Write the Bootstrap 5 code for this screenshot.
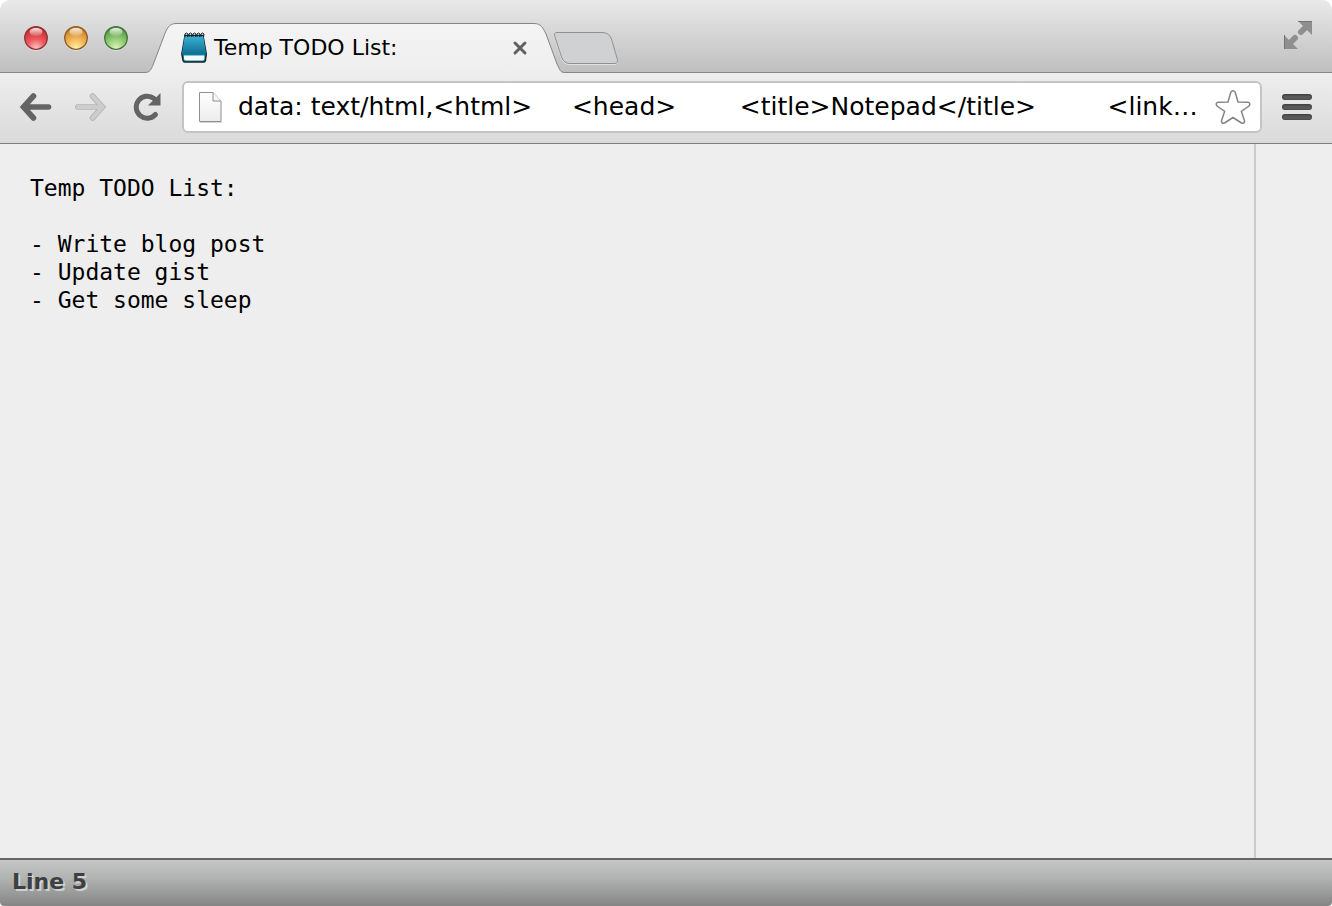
<!DOCTYPE html>
<html lang="en">
<head>
<meta charset="utf-8">
<meta name="viewport" content="width=device-width, initial-scale=1">
<title>Temp TODO List:</title>
<link href="https://cdn.jsdelivr.net/npm/bootstrap@5.3.0/dist/css/bootstrap.min.css" rel="stylesheet">
<style>
  body { background: #fff; font-family: "DejaVu Sans", sans-serif; color: #000; }
  svg { display: block; flex: none; }
  button { background: none; border: 0; padding: 0; color: #5f5f5f; }
  .browser-window { border-radius: 10px 10px 4px 4px; background: #eee; }
  .title-bar { height: 73px; padding-left: 23px; padding-right: 19px; background: linear-gradient(#e9e9e9, #bfbfbf); border-bottom: 1px solid #858585; }
  .lights { gap: 14px; margin-top: 25px; }
  .active-tab { width: 420px; height: 50px; margin: 23px 0 -1px 16px; padding-left: 36px; padding-right: 36px; font-size: 22px; }
  .tab-shape { top: 0; left: 0; }
  .tab-label { line-height: 48px; margin-left: 6px; }
  .new-tab { margin: 31px 0 0 -12px; }
  .tool-bar { height: 71px; padding: 0 19px 2px; background: linear-gradient(#eeeeee, #dadada); border-bottom: 1px solid #7d7d7d; }
  .nav-tools { gap: 23px; margin-right: 20px; }
  .address-bar { height: 52px; margin-right: 19px; padding-left: 15px; padding-right: 9px; background: #fff; border: 2px solid #c4c4c4; border-radius: 6px; }
  .address-bar input { min-width: 0; margin-left: 14px; border: 0; padding: 0; outline: 0; font-size: 25px; line-height: 36px; height: 36px; color: #000; background: none; }
  .notes { padding: 30px; border: 0; border-right: 2px solid #ccc; outline: 0; resize: none; background: #eee; color: #000; font: 23px/28px "DejaVu Sans Mono", monospace; }
  .page-margin { width: 76px; }
  .status-bar { height: 48px; padding-left: 12px; border-top: 2px solid #666; background: linear-gradient(#c6c6c6, #b0b3b1 40%, #858585); border-radius: 0 0 4px 4px; color: #3c4042; font-size: 22px; line-height: 44px; text-shadow: 2px 2px 0 #cfd1d0; }
</style>
</head>
<body>
<div class="browser-window d-flex flex-column vh-100 overflow-hidden">
  <header class="title-bar d-flex align-items-start flex-shrink-0">
    <div class="lights d-flex">
      <button type="button" aria-label="Close window"><svg width="26" height="26" viewBox="0 0 26 26">
        <defs>
          <radialGradient id="red" cx=".5" cy=".95" r=".9"><stop offset="0" stop-color="#ffc4c4"/><stop offset=".45" stop-color="#ee5a5e"/><stop offset="1" stop-color="#c0282d"/></radialGradient>
          <radialGradient id="amber" cx=".5" cy=".95" r=".9"><stop offset="0" stop-color="#fff3a4"/><stop offset=".45" stop-color="#f3b95c"/><stop offset="1" stop-color="#c87a22"/></radialGradient>
          <radialGradient id="green" cx=".5" cy=".95" r=".9"><stop offset="0" stop-color="#dcf7b8"/><stop offset=".45" stop-color="#97cf78"/><stop offset="1" stop-color="#4f943e"/></radialGradient>
          <linearGradient id="gloss" x2="0" y2="1"><stop offset="0" stop-color="#fff" stop-opacity=".9"/><stop offset="1" stop-color="#fff" stop-opacity=".1"/></linearGradient>
        </defs>
        <circle cx="13" cy="14" r="12" fill="#fff" opacity=".4"/><circle cx="13" cy="13" r="11.3" fill="url(#red)" stroke="#8c3436" stroke-width="1.3"/><ellipse cx="13" cy="7" rx="6.5" ry="4" fill="url(#gloss)"/></svg></button>
      <button type="button" aria-label="Minimize window"><svg width="26" height="26" viewBox="0 0 26 26"><circle cx="13" cy="14" r="12" fill="#fff" opacity=".4"/><circle cx="13" cy="13" r="11.3" fill="url(#amber)" stroke="#8c5a26" stroke-width="1.3"/><ellipse cx="13" cy="7" rx="6.5" ry="4" fill="url(#gloss)"/></svg></button>
      <button type="button" aria-label="Zoom window"><svg width="26" height="26" viewBox="0 0 26 26"><circle cx="13" cy="14" r="12" fill="#fff" opacity=".4"/><circle cx="13" cy="13" r="11.3" fill="url(#green)" stroke="#44713a" stroke-width="1.3"/><ellipse cx="13" cy="7" rx="6.5" ry="4" fill="url(#gloss)"/></svg></button>
    </div>
    <div class="active-tab position-relative d-flex align-items-center flex-shrink-0">
      <svg class="tab-shape position-absolute" width="420" height="50" viewBox="0 0 420 50">
        <defs><linearGradient id="tabfill" x2="0" y2="1"><stop offset="0" stop-color="#f4f4f4"/><stop offset="1" stop-color="#eee"/></linearGradient></defs>
        <path d="M0 49.500C5 49.500 6 46.500 8 42L19 13C21.500 6 24 .5 31 .5H389C396 .5 398 5 401 11L412 41C415 47 415 49.500 420 49.500V50H0Z" fill="url(#tabfill)"/>
        <path d="M0 49.500C5 49.500 6 46.500 8 42L19 13C21.500 6 24 .5 31 .5H389C396 .5 398 5 401 11L412 41C415 47 415 49.500 420 49.500" fill="none" stroke="#858585"/>
      </svg>
      <svg class="position-relative" width="27" height="32" viewBox="0 0 27 32">
        <defs><linearGradient id="pad" x2="0" y2="1"><stop offset="0" stop-color="#39b2d4"/><stop offset="1" stop-color="#0d6d90"/></linearGradient></defs>
        <path d="M4 3.500H22L25.300 22L24.500 28.500Q24 30 23 30H3.500Q2.500 30 2 28.500L.8 22Z" fill="#1a87a8" stroke="#12242c" stroke-width="1.400"/>
        <path d="M3.800 4H22.200L25 21Q25 22.500 23.500 22.500H2.500Q1 22.500 1 21Z" fill="url(#pad)"/>
        <path d="M3 23.500H23.300V26.500Q23.300 28.500 21.500 28.500H5Q3 28.500 3 26.500Z" fill="#f3fbfd"/>
        <path d="M4 5q-1-4 1.500-4t1 4M8 5q-1-4 1.500-4t1 4M12 5q-1-4 1.500-4t1 4M16 5q-1-4 1.500-4t1 4M20 5q-1-4 1.500-4t1 4" fill="none" stroke="#182025"/>
      </svg>
      <span class="tab-label position-relative flex-grow-1 text-nowrap">Temp TODO List:</span>
      <button class="position-relative" type="button" aria-label="Close tab"><svg width="18" height="18" viewBox="0 0 18 18"><path d="M4 4L14 14M14 4L4 14" stroke="#606060" stroke-width="3" stroke-linecap="round"/></svg></button>
    </div>
    <button class="new-tab" type="button" aria-label="New tab"><svg width="66" height="36" viewBox="0 0 66 36"><path d="M4 2.500H49Q56 2.500 58.500 9L64 28Q66 33.500 61 33.500H17Q11 33.500 8.500 28L2 7Q.5 2.500 4 2.500Z" fill="none" stroke="#efefef" opacity=".7"/><path d="M4 1.500H49Q56 1.500 58.500 8L64 27Q66 32.500 61 32.500H17Q11 32.500 8.500 26L2 6Q.5 1.500 4 1.500Z" fill="#d0d1d2" stroke="#909090"/></svg></button>
    <button class="ms-auto mt-3" type="button" aria-label="Full screen"><svg width="30" height="36" viewBox="0 0 30 36"><path d="M15 5H29V19ZM1 19V33H15Z" fill="#8f8f8f"/><path d="M24 10L18 16M6 28L12 22" stroke="#8f8f8f" stroke-width="6" stroke-linecap="round"/><path d="M15 5.500H29M1.500 19V33" stroke="#747474"/></svg></button>
  </header>

  <nav class="tool-bar d-flex align-items-center flex-shrink-0" aria-label="Browser">
    <div class="nav-tools d-flex align-items-center">
      <button type="button" aria-label="Back"><svg width="33" height="30" viewBox="0 0 33 30"><path d="M14.500 4L4.500 15L14.500 26M5 15H29.500" fill="none" stroke="#646464" stroke-width="5.600" stroke-linecap="round" stroke-linejoin="miter"/></svg></button>
      <button type="button" aria-label="Forward" disabled><svg width="33" height="30" viewBox="0 0 33 30"><path d="M17.500 4L27.500 15L17.500 26M27 15H2.800" fill="none" stroke="#b4b4b4" stroke-width="5.600" stroke-linecap="round"/><path d="M17.500 4L27.500 15L17.500 26M27 15H2.800" fill="none" stroke="#cdcdcd" stroke-width="4" stroke-linecap="round"/></svg></button>
      <button type="button" aria-label="Reload"><svg width="31" height="30" viewBox="0 0 31 30"><path d="M23 6.500A11 11 0 1 0 24.500 22.500" fill="none" stroke="#646464" stroke-width="5" stroke-linecap="round"/><path d="M29.500 1V13.500H17Z" fill="#646464"/></svg></button>
    </div>
    <div class="address-bar d-flex align-items-center flex-grow-1">
      <svg width="25" height="32" viewBox="0 0 25 32"><defs><linearGradient id="sheet" x2="0" y2="1"><stop offset="0" stop-color="#fff"/><stop offset="1" stop-color="#ececec"/></linearGradient></defs><path d="M1 31.500H23" stroke="#d8d8d8"/><path d="M.5 1.500H14L22 10V30.500H.5Z" fill="url(#sheet)" stroke="#8e8e8e"/><path d="M14 1.500V10H22" fill="#f6f6f6" stroke="#8e8e8e"/></svg>
      <input class="flex-grow-1" type="text" aria-label="Address" spellcheck="false" value="data: text/html,&lt;html&gt;     &lt;head&gt;        &lt;title&gt;Notepad&lt;/title&gt;         &lt;link…">
      <button type="button" aria-label="Bookmark this page"><svg width="36" height="36" viewBox="0 0 36 36"><path d="M15.800 3.200Q18 .2 20.200 3.200L23 13L33 13.300Q36 14 34 17L26.300 22.300L29.600 32Q29.500 35 26.500 34L18 28.500L9.500 34Q6.500 35 6.400 32L9.700 22.300L2 17Q0 14 3 13.300L13 13Z" fill="#fff" stroke="#858585" stroke-width="1.500" stroke-linejoin="round"/></svg></button>
    </div>
    <button type="button" aria-label="Menu"><svg width="32" height="28" viewBox="0 0 32 28"><path d="M4 4H28M4 14H28M4 24H28" stroke="#424242" stroke-width="6" stroke-linecap="round"/><path d="M4 4.500H28M4 14.500H28M4 24.500H28" stroke="#585858" stroke-width="4" stroke-linecap="round"/></svg></button>
  </nav>

  <main class="d-flex flex-grow-1 overflow-hidden">
    <textarea class="notes flex-grow-1" aria-label="Notes" spellcheck="false">Temp TODO List:

- Write blog post
- Update gist
- Get some sleep</textarea>
    <div class="page-margin flex-shrink-0"></div>
  </main>
  <footer class="status-bar flex-shrink-0 fw-bold">Line 5</footer>
</div>
<script src="https://cdn.jsdelivr.net/npm/bootstrap@5.3.0/dist/js/bootstrap.bundle.min.js"></script>
</body>
</html>
